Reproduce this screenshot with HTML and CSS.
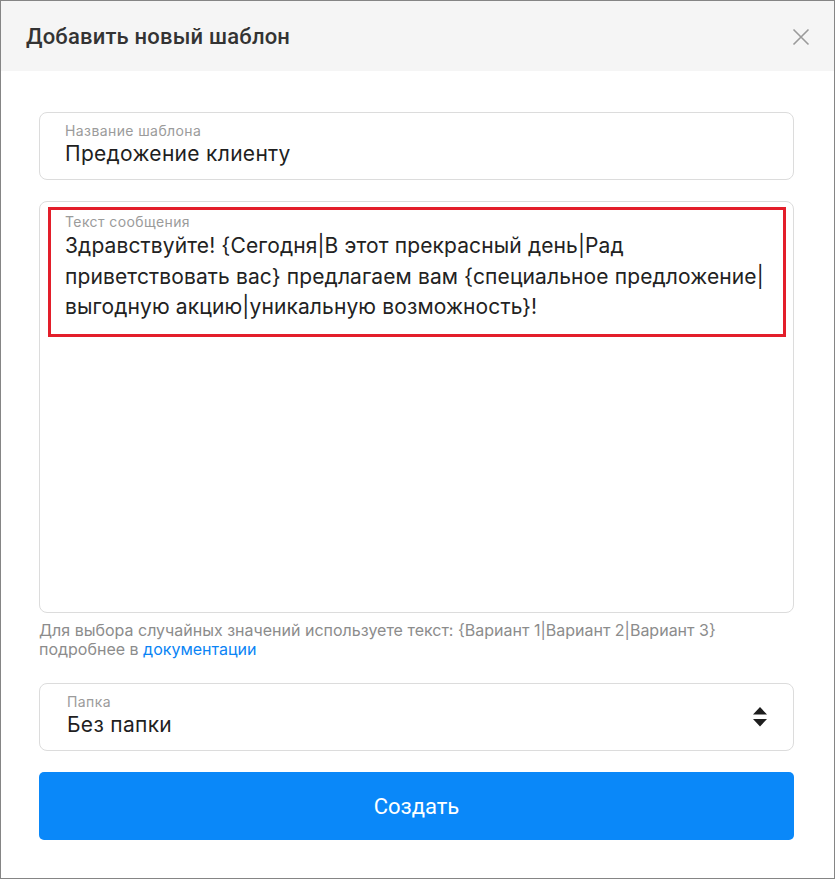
FILE: index.html
```html
<!DOCTYPE html>
<html lang="ru">
<head>
<meta charset="utf-8">
<title>Добавить новый шаблон</title>
<link rel="stylesheet" href="styles.css">
</head>
<body>
<div class="modal">
  <div class="modal-header">
    <h1 class="modal-title">Добавить новый шаблон</h1>
    <button class="close" aria-label="Закрыть">
      <svg width="18" height="18" viewBox="0 0 18 18"><path d="M1.5 1.5 L16.5 16.5 M16.5 1.5 L1.5 16.5" stroke="#9a9a9a" stroke-width="1.6" fill="none"/></svg>
    </button>
  </div>
  <div class="modal-body">
    <div class="field">
      <div class="field-label">Название шаблона</div>
      <div class="field-value">Предожение клиенту</div>
    </div>
    <div class="textarea">
      <div class="highlight">
        <div class="field-label">Текст сообщения</div>
        <div class="message">Здравствуйте! {Сегодня|В этот прекрасный день|Рад приветствовать вас} предлагаем вам {специальное предложение|выгодную акцию|уникальную возможность}!</div>
      </div>
    </div>
    <p class="hint">Для выбора случайных значений используете текст: {Вариант 1|Вариант 2|Вариант 3}<br>подробнее в <a href="#">документации</a></p>
    <div class="field select">
      <div class="select-text">
        <div class="field-label">Папка</div>
        <div class="field-value">Без папки</div>
      </div>
      <svg class="arrows" width="16" height="22" viewBox="0 0 16 22"><path d="M8 1 L15 8.5 L1 8.5 Z M1 13 L15 13 L8 20.5 Z" fill="#1e1e1e"/></svg>
    </div>
    <button class="submit">Создать</button>
  </div>
</div>
</body>
</html>
```
FILE: styles.css
```css
* { box-sizing: border-box; }
html, body { margin: 0; padding: 0; background: #fff; }
body { font-family: Inter, "Noto Sans", sans-serif; }

.modal {
  width: 835px;
  height: 879px;
  border: 1px solid #858585;
  background: #fff;
}

.modal-header {
  height: 70px;
  background: #f5f5f5;
  display: flex;
  align-items: center;
  justify-content: space-between;
  padding: 0 24px 0 25px;
}

.modal-title {
  margin: 0;
  font-family: Roboto, "Liberation Sans", sans-serif;
  font-weight: 500;
  font-size: 22px;
  letter-spacing: 0.2px;
  color: #333;
}

.close {
  border: 0;
  background: none;
  padding: 0;
  width: 18px;
  height: 18px;
  display: flex;
  margin-top: 1px;
}

.modal-body {
  padding: 41px 40px 0 38px;
  display: flex;
  flex-direction: column;
}

.field {
  height: 68px;
  border: 1px solid #dcdcdc;
  border-radius: 8px;
  padding: 9px 25px 0 25px;
}

.field-label {
  font-size: 14px;
  letter-spacing: 0.4px;
  line-height: 17px;
  color: #9b9b9b;
}

.field-value {
  font-size: 21px;
  letter-spacing: 0.3px;
  line-height: 30px;
  color: #1f1f1f;
}

.textarea {
  margin-top: 21px;
  height: 412px;
  border: 1px solid #dcdcdc;
  border-radius: 8px;
  padding: 5px 7px 0 8px;
}

.highlight {
  border: 3px solid #e31e2a;
  height: 130px;
  padding: 3px 6px 0 14px;
}

.message {
  font-size: 21px;
  letter-spacing: 0.12px;
  line-height: 30.5px;
  color: #222;
  margin-top: 1px;
}

.hint {
  margin: 8px 0 0 0;
  font-size: 16px;
  line-height: 19px;
  color: #8c8c8c;
}

.hint a {
  color: #0a84f5;
  text-decoration: none;
}

.select {
  margin-top: 24px;
  display: flex;
  align-items: center;
  justify-content: space-between;
  padding: 0 25px 0 27px;
}

.select-text {
  align-self: flex-start;
  padding-top: 9px;
}

.submit {
  margin-top: 21px;
  height: 68px;
  border: 0;
  border-radius: 5px;
  background: #0a88f9;
  color: #fff;
  font-family: Roboto, "Liberation Sans", sans-serif;
  font-size: 22px;
  font-weight: 400;
}
```
